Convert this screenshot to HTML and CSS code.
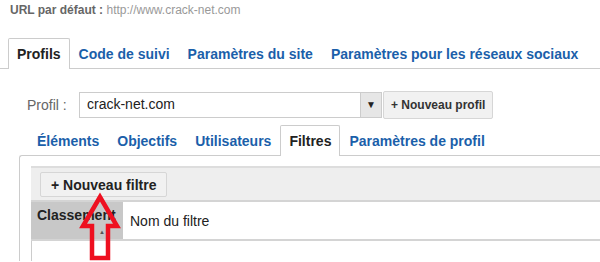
FILE: index.html
```html
<!DOCTYPE html>
<html lang="fr">
<head>
    <meta charset="UTF-8">
    <title>Profils</title>
    <link rel="stylesheet" href="styles.css">
</head>
<body>
    <div class="default-url"><b>URL par défaut :</b> <span>http://www.crack-net.com</span></div>

    <ul class="tabs main-tabs">
        <li class="active">Profils</li>
        <li>Code de suivi</li>
        <li>Paramètres du site</li>
        <li>Paramètres pour les réseaux sociaux</li>
    </ul>

    <div class="profile-row">
        <label>Profil :</label>
        <div class="profile-select">
            <span class="value">crack-net.com</span>
            <span class="arrow">▼</span>
        </div>
        <button class="btn btn-small">+ Nouveau profil</button>
    </div>

    <div class="profile-area">
        <ul class="tabs sub-tabs">
            <li>Éléments</li>
            <li>Objectifs</li>
            <li>Utilisateurs</li>
            <li class="active">Filtres</li>
            <li>Paramètres de profil</li>
        </ul>

        <div class="panel">
            <div class="toolbar">
                <button class="btn">+ Nouveau filtre</button>
            </div>
            <div class="filter-head">
                <div class="col-rank">Classement<span class="sort">▲</span></div>
                <div class="col-name">Nom du filtre</div>
            </div>
            <div class="filter-body"></div>
        </div>
    </div>

    <!-- flèche rouge ajoutée sur la capture -->
    <svg class="callout-arrow" width="600" height="262" viewBox="0 0 600 262">
        <polygon points="100,197 83,226 92,226 92,258 108,258 108,226 117,226" fill="none" stroke="#ee1020" stroke-width="4.5"/>
    </svg>
</body>
</html>
```

FILE: styles.css
```css
* {
    margin: 0;
    padding: 0;
    box-sizing: border-box;
}

body {
    width: 600px;
    height: 262px;
    overflow: hidden;
    background: #fff;
    font-family: 'Liberation Sans', Arial, sans-serif;
    color: #222;
}

/* URL en haut */
.default-url {
    padding: 3px 0 0 10px;
    height: 18px;
    font-size: 12px;
    line-height: 14px;
    color: #666;
}

.default-url span {
    color: #999;
}

/* Onglets */
.tabs {
    display: flex;
    list-style: none;
}

.tabs li {
    position: relative;
    padding: 0 8px;
    line-height: 30px;
    margin-bottom: -1px;
    border: 1px solid transparent;
    border-bottom: none;
    border-radius: 2px 2px 0 0;
    font-size: 14px;
    font-weight: bold;
    color: #1b5faa;
    white-space: nowrap;
}

.tabs li.active {
    background: #fff;
    border-color: #ccc;
    color: #222;
}

.main-tabs {
    margin-top: 20px;
    padding-left: 8px;
    border-bottom: 1px solid #ccc;
}

/* Ligne profil */
.profile-row {
    display: flex;
    align-items: center;
    height: 28px;
    margin: 22px 0 0 27px;
}

.profile-row label {
    font-size: 14px;
    color: #666;
    width: 52px;
}

.profile-select {
    display: flex;
    width: 303px;
    height: 26px;
    border: 1px solid #ccc;
    background: #fff;
}

.profile-select .value {
    flex: 1;
    padding-left: 7px;
    font-size: 14px;
    line-height: 22px;
    color: #222;
}

.profile-select .arrow {
    width: 21px;
    background: #e6e6e6;
    border-left: 1px solid #ccc;
    font-size: 10px;
    line-height: 24px;
    text-align: center;
    color: #222;
}

.btn {
    height: 25px;
    padding: 0 10px;
    background: #f1f1f1;
    border: 1px solid #d6d6d6;
    border-radius: 2px;
    font-family: inherit;
    font-size: 14px;
    font-weight: bold;
    color: #222;
}

.btn-small {
    height: 28px;
    margin-left: 1px;
    padding: 0 7px;
    font-size: 12px;
    color: #333;
}

/* Zone du profil */
.profile-area {
    margin: 6px 0 0 19px;
}

.sub-tabs {
    padding-left: 9px;
}

.sub-tabs li {
    z-index: 1;
}

.panel {
    border-top: 1px solid #ccc;
    border-left: 1px solid #ccc;
    border-top-left-radius: 3px;
    padding: 10px 0 0 11px;
}

.toolbar {
    padding: 4px 0 3px 9px;
    background: #eee;
    border-top: 2px solid #ddd;
    border-bottom: 2px solid #d4d4d4;
}

.filter-head {
    display: flex;
    height: 39px;
    border-bottom: 2px solid #d4d4d4;
}

.col-rank {
    position: relative;
    width: 92px;
    padding: 5px 0 0 6px;
    background: #c8c8c8;
    font-size: 14px;
    font-weight: bold;
    color: #222;
}

.col-rank .sort {
    position: absolute;
    right: 18px;
    bottom: 4px;
    font-size: 6px;
    color: #555;
}

.col-name {
    padding: 11px 0 0 7px;
    font-size: 14px;
    color: #222;
}

.filter-body {
    height: 20px;
    border-left: 1px solid #ccc;
}

/* Flèche d'annotation */
.callout-arrow {
    position: absolute;
    left: 0;
    top: 0;
    pointer-events: none;
}
```
